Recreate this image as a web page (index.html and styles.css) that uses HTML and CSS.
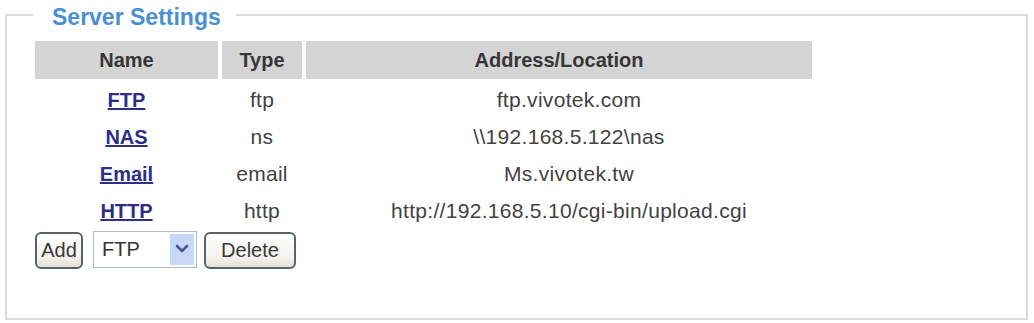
FILE: index.html
```html
<!DOCTYPE html>
<html>
<head>
<meta charset="utf-8">
<link rel="stylesheet" href="styles.css">
</head>
<body>
<fieldset class="panel">
  <legend class="panel-title">Server Settings</legend>
  <table class="servers">
    <thead>
      <tr>
        <th class="col-name">Name</th>
        <th class="col-type">Type</th>
        <th class="col-addr">Address/Location</th>
      </tr>
    </thead>
    <tbody>
      <tr><td><a class="srv-link" href="#">FTP</a></td><td>ftp</td><td class="addr">ftp.vivotek.com</td></tr>
      <tr><td><a class="srv-link" href="#">NAS</a></td><td>ns</td><td class="addr">\\192.168.5.122\nas</td></tr>
      <tr><td><a class="srv-link" href="#">Email</a></td><td>email</td><td class="addr">Ms.vivotek.tw</td></tr>
      <tr><td><a class="srv-link" href="#">HTTP</a></td><td>http</td><td class="addr">http://192.168.5.10/cgi-bin/upload.cgi</td></tr>
    </tbody>
  </table>
  <div class="controls">
    <button class="btn btn-add" type="button">Add</button>
    <div class="select">
      <span class="select-value">FTP</span>
      <span class="select-arrow">
        <svg width="14" height="10" viewBox="0 0 14 10"><path d="M2 2 L7 7 L12 2" fill="none" stroke="#3d5a9c" stroke-width="2.6" stroke-linecap="round" stroke-linejoin="round"/></svg>
      </span>
    </div>
    <button class="btn btn-delete" type="button">Delete</button>
  </div>
</fieldset>
</body>
</html>
```

FILE: styles.css
```css
html, body {
  margin: 0;
  padding: 0;
  background: #ffffff;
}

body {
  font-family: "Liberation Sans", Arial, sans-serif;
  color: #3a3a3a;
  width: 1034px;
  height: 323px;
  overflow: hidden;
}

.panel {
  margin: 2px 6px 3px 5px;
  padding: 9px 24px 50px 24px;
  border: 2px solid #dadada;
  min-width: 0;
  box-sizing: border-box;
  height: 318px;
}

.panel-title {
  margin-left: 2px;
  padding: 4px 15px 0 19px;
  font-size: 23px;
  line-height: 22px;
  font-weight: bold;
  color: #4a8fd2;
}

.servers {
  border-collapse: separate;
  border-spacing: 4px;
}

.servers th {
  background: #d4d4d4;
  height: 38px;
  padding: 0;
  font-size: 20px;
  font-weight: bold;
  color: #363636;
  text-align: center;
  vertical-align: middle;
}

.col-name { width: 183px; }
.col-type { width: 80px; }
.col-addr { width: 506px; }

.servers td {
  height: 33px;
  padding: 0;
  font-size: 21px;
  letter-spacing: 0.3px;
  text-align: center;
  vertical-align: middle;
  color: #424242;
}

.servers td.addr {
  padding-left: 20px;
}

.srv-link {
  font-size: 20px;
  font-weight: bold;
  letter-spacing: 0;
  color: #2e2e86;
  text-decoration: underline;
}

.controls {
  display: flex;
  align-items: center;
  margin-left: 4px;
  height: 39px;
}

.btn {
  font-family: "Liberation Sans", Arial, sans-serif;
  font-size: 20px;
  color: #3a3a3a;
  height: 37px;
  padding: 0;
  border: 2px solid #56636f;
  border-radius: 6px;
  background: linear-gradient(#ffffff, #f4f2ec 70%, #e4e1d6);
  box-sizing: border-box;
}

.btn-add {
  width: 48px;
  margin-right: 10px;
}

.btn-delete {
  width: 92px;
  margin-left: 7px;
}

.select {
  display: flex;
  align-items: stretch;
  width: 104px;
  height: 37px;
  box-sizing: border-box;
  border: 1px solid #a9bccf;
  background: #ffffff;
  padding: 2px;
  margin-top: -3px;
}

.select-value {
  flex: 1;
  display: flex;
  align-items: center;
  padding-left: 6px;
  font-size: 20px;
  color: #333333;
}

.select-arrow {
  width: 24px;
  display: flex;
  align-items: center;
  justify-content: center;
  background: #c9d8f6;
}
```
